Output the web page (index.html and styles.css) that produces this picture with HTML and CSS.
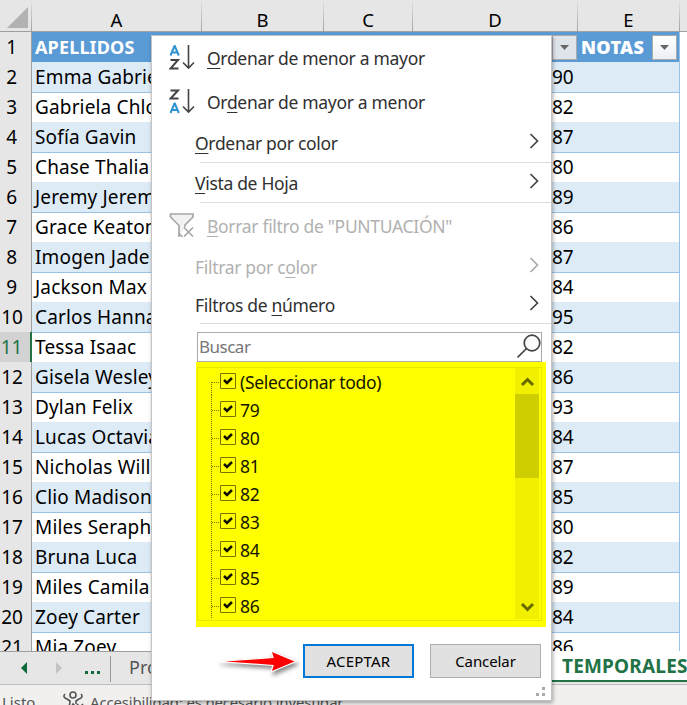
FILE: index.html
```html
<!DOCTYPE html>
<html lang="es">
<head>
<meta charset="utf-8">
<title>Temporales</title>
<link rel="stylesheet" href="styles.css">
</head>
<body>
<div class="app">
  <div class="columns">
    <div class="corner"><svg width="31" height="31"><path d="M28 7v21H7z" fill="#b2b2b2"/></svg></div>
    <div>A</div><div>B</div><div>C</div><div>D</div><div>E</div><div></div>
  </div>
  <div class="sheet" id="sheet"></div>
  <div class="tabs">
    <svg class="nav" width="110" height="34"><path d="M27 10v12l-6-6z" fill="#0f6b3b"/><path d="M56 10v12l6-6z" fill="#c3c3c3"/><path d="M85 19h3v3h-3zm6 0h3v3h-3zm6 0h3v3h-3z" fill="#0f6b3b"/></svg>
    <span class="tab">Pro</span>
    <span class="tab active">TEMPORALES</span>
  </div>
  <div class="status">
    <span class="ready">Listo</span>
    <svg width="24" height="22" viewBox="0 0 24 22" fill="none" stroke="#555" stroke-width="1.6"><circle cx="11" cy="4" r="3"/><path d="M3 3C1 5 2 7 5 8l3 2c0 5-2 8-4 11M19 3c2 2 1 4-2 5l-3 2v3M8 18l3-5 2 2M15 13l6 6m0-6l-6 6"/></svg>
    <span class="access">Accesibilidad: es necesario investigar</span>
  </div>
</div>

<div class="menu">
  <div class="item sort">
    <svg width="26" height="26" fill="none" stroke-width="2"><path d="M1.500 10.500L5.500 1h.3l4 9.500M3 7.500h5.500" stroke="#2e93cf"/><path d="M1.500 15H9L1.500 23.500h8" stroke="#444"/><path d="M19.500 0v22.500M14 17.500l5.500 5.500 5.500-5.500" stroke="#444" stroke-width="1.600"/></svg>
    <span><u>O</u>rdenar de menor a mayor</span>
  </div>
  <div class="item sort">
    <svg width="26" height="26" fill="none" stroke-width="2"><path d="M1.500 1.500H9L1.500 9.500h8" stroke="#444"/><path d="M1.500 24L5.500 14.500h.3l4 9.500M3 21h5.500" stroke="#2e93cf"/><path d="M19.500 0v22.500M14 17.500l5.500 5.500 5.500-5.500" stroke="#444" stroke-width="1.600"/></svg>
    <span>Or<u>d</u>enar de mayor a menor</span>
  </div>
  <div class="item plain color"><span><u>O</u>rdenar por color</span><svg class="chev" width="10" height="16"><path d="M1.500 1l7 7-7 7"/></svg></div>
  <div class="item plain view"><span><u>V</u>ista de Hoja</span><svg class="chev" width="10" height="16"><path d="M1.500 1l7 7-7 7"/></svg></div>
  <div class="item sort off clear">
    <svg width="26" height="26" fill="none" stroke="#a6a6a6" stroke-width="1.700"><path d="M10 24V12.500L1.500 4V1H24v3l-8 8v2" fill="#f2f2f2"/><path d="M10 20.500l3.500 3.500M15 14.500l9 9m0-9l-9 9"/></svg>
    <span><u>B</u>orrar filtro de "PUNTUACIÓN"</span>
  </div>
  <div class="item plain off bycolor"><span>Filtrar por c<u>o</u>lor</span><svg class="chev" width="10" height="16"><path d="M1.500 1l7 7-7 7"/></svg></div>
  <div class="item plain numbers"><span>Filtros de <u>n</u>úmero</span><svg class="chev" width="10" height="16"><path d="M1.500 1l7 7-7 7"/></svg></div>
  <div class="search"><span>Buscar</span><svg width="24" height="26" fill="#fafafa" stroke="#444" stroke-width="1.700"><circle cx="15" cy="9" r="7.800"/><path d="M9.500 14.500L.5 23.500"/></svg></div>
  <div class="highlight">
    <div class="list">
      <div class="checks" id="checks"></div>
      <div class="scroll">
        <svg width="24" height="26" fill="none" stroke="#6a6a00" stroke-width="3"><path d="M7 17l5.500-5.500L18 17"/></svg>
        <div class="thumb"></div>
        <svg class="down" width="24" height="27" fill="none" stroke="#6a6a00" stroke-width="3"><path d="M7 12l5.500 5.500L18 12"/></svg>
      </div>
    </div>
  </div>
  <div class="actions">
    <svg class="arrow" width="88" height="34"><path d="M1 17.500l55-4-2-6.500 25 10.500-25 10.500 2-6.500z" fill="#f00" stroke="#fff" stroke-width="1.200"/></svg>
    <button class="ok">ACEPTAR</button>
    <button>Cancelar</button>
  </div>
  <svg class="grip" width="10" height="10" fill="#aaa"><path d="M6 0h3v3H6zM0 6h3v3H0zm6 0h3v3H6z"/></svg>
</div>
<script src="app.js"></script>
</body>
</html>
```
FILE: styles.css
```css
* { box-sizing: border-box; }
body { margin: 0; width: 687px; height: 705px; overflow: hidden; background: #fff; font-family: "Noto Sans", sans-serif; color: #000; position: relative; }
svg { display: block; flex: none; }
.app { width: 687px; height: 705px; overflow: hidden; }
.columns { height: 32px; display: grid; grid-template-columns: 32px 170px 122px 89px 165px 102px 7px; background: #e6e6e6; border-bottom: 1px solid #9f9f9f; font-size: 18.5px; line-height: 39px; text-align: center; }
.columns > div { height: 31px; border-right: 1px solid; border-image: linear-gradient(#e0e0e0 8%, #a0a0a0) 1; }
.columns > div:last-child { border: 0; }
.sheet { height: 619px; overflow: hidden; }
.row { display: grid; grid-template-columns: 32px 520px 128px; height: 30px; font-size: 19px; line-height: 30px; }
.num { background: #e6e6e6; border-right: 1px solid #9f9f9f; border-bottom: 1px solid #b0b0b0; text-align: center; padding-right: 8px; letter-spacing: -.2px; white-space: nowrap; }
.num.wide { padding-right: 7px; }
.num.current { background: #d2d2d2; color: #217346; border-right: 2px solid #217346; }
.name, .score { border-bottom: 1px solid #9bc2e6; white-space: nowrap; overflow: hidden; }
.name { padding-left: 3px; letter-spacing: .15px; }
.name span { display: inline-block; }
.score { border-right: 1px solid #9bc2e6; }
.band .name, .band .score { background: #ddebf7; }
.head .name, .head .score { background: #5b9bd5; color: #fff; font-weight: 700; font-size: 18px; }
.head .score { display: flex; padding-top: 3px; line-height: 24px; letter-spacing: .3px; }
.head .score b { width: 75px; padding-left: 4px; }
.drop { width: 25px; height: 25px; border: 1px solid #aaa; background: linear-gradient(#fff, #eceff5); display: grid; place-items: center; }
.drop.on { background: #dfe3ea; }
.tabs { height: 34px; background: #e6e6e6; border-top: 1px solid #9f9f9f; border-bottom: 1px solid #bdbdbd; display: flex; }
.tab { flex: none; width: 442px; height: 26px; margin-top: 4px; border-left: 1px solid #999; padding-left: 18px; font-size: 18px; line-height: 22px; color: #555; }
.tab.active { width: 140px; height: 31px; margin: -1px 0 0; border: 0; border-bottom: 2px solid #217346; background: #fff; color: #217346; font-size: 19px; letter-spacing: .2px; font-weight: 700; padding: 3px 0 0 10px; line-height: 24px; }
.status { height: 20px; background: #f1f0ef; display: flex; overflow: hidden; font-size: 15px; color: #555; padding-left: 2px; }
.ready { width: 60px; line-height: 34px; }
.status svg { margin-top: 6px; }
.access { line-height: 34px; padding-left: 4px; white-space: nowrap; letter-spacing: -.18px; }
.menu { position: absolute; left: 151px; top: 35px; width: 401px; height: 666px; background: #fff; border: 1px solid #c4c4c4; box-shadow: 1px 2px 4px #0005; font-size: 17.5px; letter-spacing: -.32px; color: #303030; overflow: hidden; }
.item { display: flex; align-items: center; white-space: nowrap; }
u { text-decoration-thickness: 1px; text-underline-offset: 3px; }
.sort { height: 44px; padding-left: 17px; gap: 12px; }
.plain { height: 40px; padding: 0 12px 0 43px; justify-content: space-between; }
.chev { fill: none; stroke: #444; stroke-width: 1.7; margin-top: -4px; }
.color, .view, .numbers { position: relative; }
.color::after, .view::after, .numbers::after { content: ""; position: absolute; left: 48px; right: 0; bottom: 0; height: 1px; background: #dcdcdc; }
.color { margin-top: -1px; }
.clear { height: 46px; }
.off { color: #b1b1b1; }
.off .chev { stroke: #aaa; }
.bycolor { height: 36px; }
.numbers { height: 39px; }
.search { margin: 8px 0 0 45px; width: 345px; height: 30px; border: 1px solid #aaa; display: flex; justify-content: space-between; padding: 1px 0 0 1px; color: #767676; line-height: 26px; font-size: 17px; letter-spacing: -.5px; }
.highlight { margin-left: 44px; width: 350px; height: 265px; background: #ff0; padding: 5px 4px 6px 1px; }
.list { height: 254px; border: 1px solid #e6e600; display: flex; justify-content: space-between; padding: 0 2px 1px 0; overflow: hidden; color: #151500; }
.checks { width: 290px; margin-left: 13px; }
.check { height: 28px; display: flex; align-items: center; position: relative; font-size: 17.5px; }
.check svg { margin: -3px 3px 0 0; }
.scroll { width: 24px; background: #f0f000; display: flex; flex-direction: column; }
.thumb { height: 84px; background: #cece00; }
.down { margin-top: auto; }
.actions { display: flex; margin: 17px 0 0 65px; height: 34px; }
.arrow { filter: drop-shadow(2px 3px 2px #0007); }
button { flex: none; width: 111px; height: 34px; border: 1px solid #adadad; background: #e1e1e1; font: 15px "Noto Sans", sans-serif; letter-spacing: -.1px; padding: 0; margin-right: 16px; }
.ok { margin-left: -2px; border: 2px solid #0078d7; letter-spacing: .2px; }
.grip { position: absolute; right: 5px; bottom: 3px; }
```
FILE: app.js
```js
const names = ['Emma Gabriela', 'Gabriela Chloe', 'Sofía Gavin', 'Chase Thalia', 'Jeremy Jeremy', 'Grace Keaton', 'Imogen Jade', 'Jackson Max', 'Carlos Hanna', 'Tessa Isaac', 'Gisela Wesley', 'Dylan Felix', 'Lucas Octavia', 'Nicholas William', 'Clio Madison', 'Miles Seraphina', 'Bruna Luca', 'Miles Camila', 'Zoey Carter', 'Mia Zoey'];
const scores = [90, 82, 87, 80, 89, 86, 87, 84, 95, 82, 86, 93, 84, 87, 85, 80, 82, 89, 84, 86];
const arrow = '<svg width="10" height="5"><path d="M0 0h9L4.500 5z" fill="#666"/></svg>';
const head = `<div class="row head"><div class="num">1</div><div class="name"><span>APELLIDOS</span></div><div class="score"><span class="drop on">${arrow}</span><b>NOTAS</b><span class="drop">${arrow}</span></div></div>`;
document.getElementById('sheet').innerHTML = head + names.map((name, i) => {
  const n = i + 2;
  return `<div class="row ${i % 2 ? '' : 'band'}"><div class="num ${n > 9 ? 'wide' : ''} ${n === 11 ? 'current' : ''}">${n}</div><div class="name"><span>${name}</span></div><div class="score">${scores[i]}</div></div>`;
}).join('');
const labels = ['(Seleccionar todo)', 79, 80, 81, 82, 83, 84, 85, 86];
document.getElementById('checks').innerHTML = labels.map((label, i) =>
  `<div class="check"><svg width="26" height="28"><path d="M.5 ${i ? 0 : 15}V28M1 15.500h8" fill="none" stroke="#777700" stroke-dasharray="1 1"/><path d="M9.500 6.500h15v15h-15z" fill="#ff0" stroke="#777700"/><path d="M13 13l3 3 5-5" fill="none" stroke="#111100" stroke-width="2.500"/></svg><span>${label}</span></div>`).join('');
```
